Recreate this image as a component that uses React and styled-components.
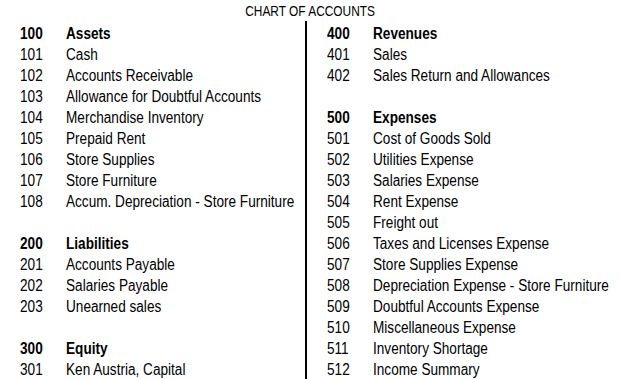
import React from "react";
import styled, { createGlobalStyle } from "styled-components";

const Global = createGlobalStyle`
  html, body { margin: 0; padding: 0; background: #fff; }
  body { font-family: "Liberation Sans", Arial, sans-serif; color: #000; }
`;

const Page = styled.div`
  width: 621px;
  height: 379px;
  overflow: hidden;
  display: flex;
  flex-direction: column;
  padding-top: 1px;
  box-sizing: border-box;
`;

const Title = styled.div`
  height: 20px;
  line-height: 21px;
  font-size: 14.5px;
  text-align: center;
`;

const Narrow = styled.span`
  display: inline-block;
  transform: scaleX(${(p) => (p.$center ? 0.82 : 0.85)});
  transform-origin: ${(p) => (p.$center ? "center" : "left")};
`;

const Columns = styled.div`
  flex: 1;
  display: grid;
  grid-template-columns: 305px 1fr;
`;

const Column = styled.div`
  padding-left: 20px;
  padding-top: 1.5px;
  border-left: ${(p) => (p.$right ? "2px solid #000" : "none")};
`;

const Row = styled.div`
  display: grid;
  grid-template-columns: 46px 1fr;
  height: 21px;
  line-height: 21px;
  font-size: 16px;
  font-weight: ${(p) => (p.$head ? 700 : 400)};
  white-space: nowrap;
`;

const left = [
  ["100", "Assets", true],
  ["101", "Cash"],
  ["102", "Accounts Receivable"],
  ["103", "Allowance for Doubtful Accounts"],
  ["104", "Merchandise Inventory"],
  ["105", "Prepaid Rent"],
  ["106", "Store Supplies"],
  ["107", "Store Furniture"],
  ["108", "Accum. Depreciation - Store Furniture"],
  null,
  ["200", "Liabilities", true],
  ["201", "Accounts Payable"],
  ["202", "Salaries Payable"],
  ["203", "Unearned sales"],
  null,
  ["300", "Equity", true],
  ["301", "Ken Austria, Capital"],
];

const right = [
  ["400", "Revenues", true],
  ["401", "Sales"],
  ["402", "Sales Return and Allowances"],
  null,
  ["500", "Expenses", true],
  ["501", "Cost of Goods Sold"],
  ["502", "Utilities Expense"],
  ["503", "Salaries Expense"],
  ["504", "Rent Expense"],
  ["505", "Freight out"],
  ["506", "Taxes and Licenses Expense"],
  ["507", "Store Supplies Expense"],
  ["508", "Depreciation Expense - Store Furniture"],
  ["509", "Doubtful Accounts Expense"],
  ["510", "Miscellaneous Expense"],
  ["511", "Inventory Shortage"],
  ["512", "Income Summary"],
];

const renderRows = (rows) =>
  rows.map((r, i) =>
    r ? (
      <Row key={i} $head={r[2]}>
        <Narrow>{r[0]}</Narrow>
        <Narrow>{r[1]}</Narrow>
      </Row>
    ) : (
      <Row key={i} />
    )
  );

export default function App() {
  return (
    <>
      <Global />
      <Page>
        <Title>
          <Narrow $center>CHART OF ACCOUNTS</Narrow>
        </Title>
        <Columns>
          <Column>{renderRows(left)}</Column>
          <Column $right>{renderRows(right)}</Column>
        </Columns>
      </Page>
    </>
  );
}
